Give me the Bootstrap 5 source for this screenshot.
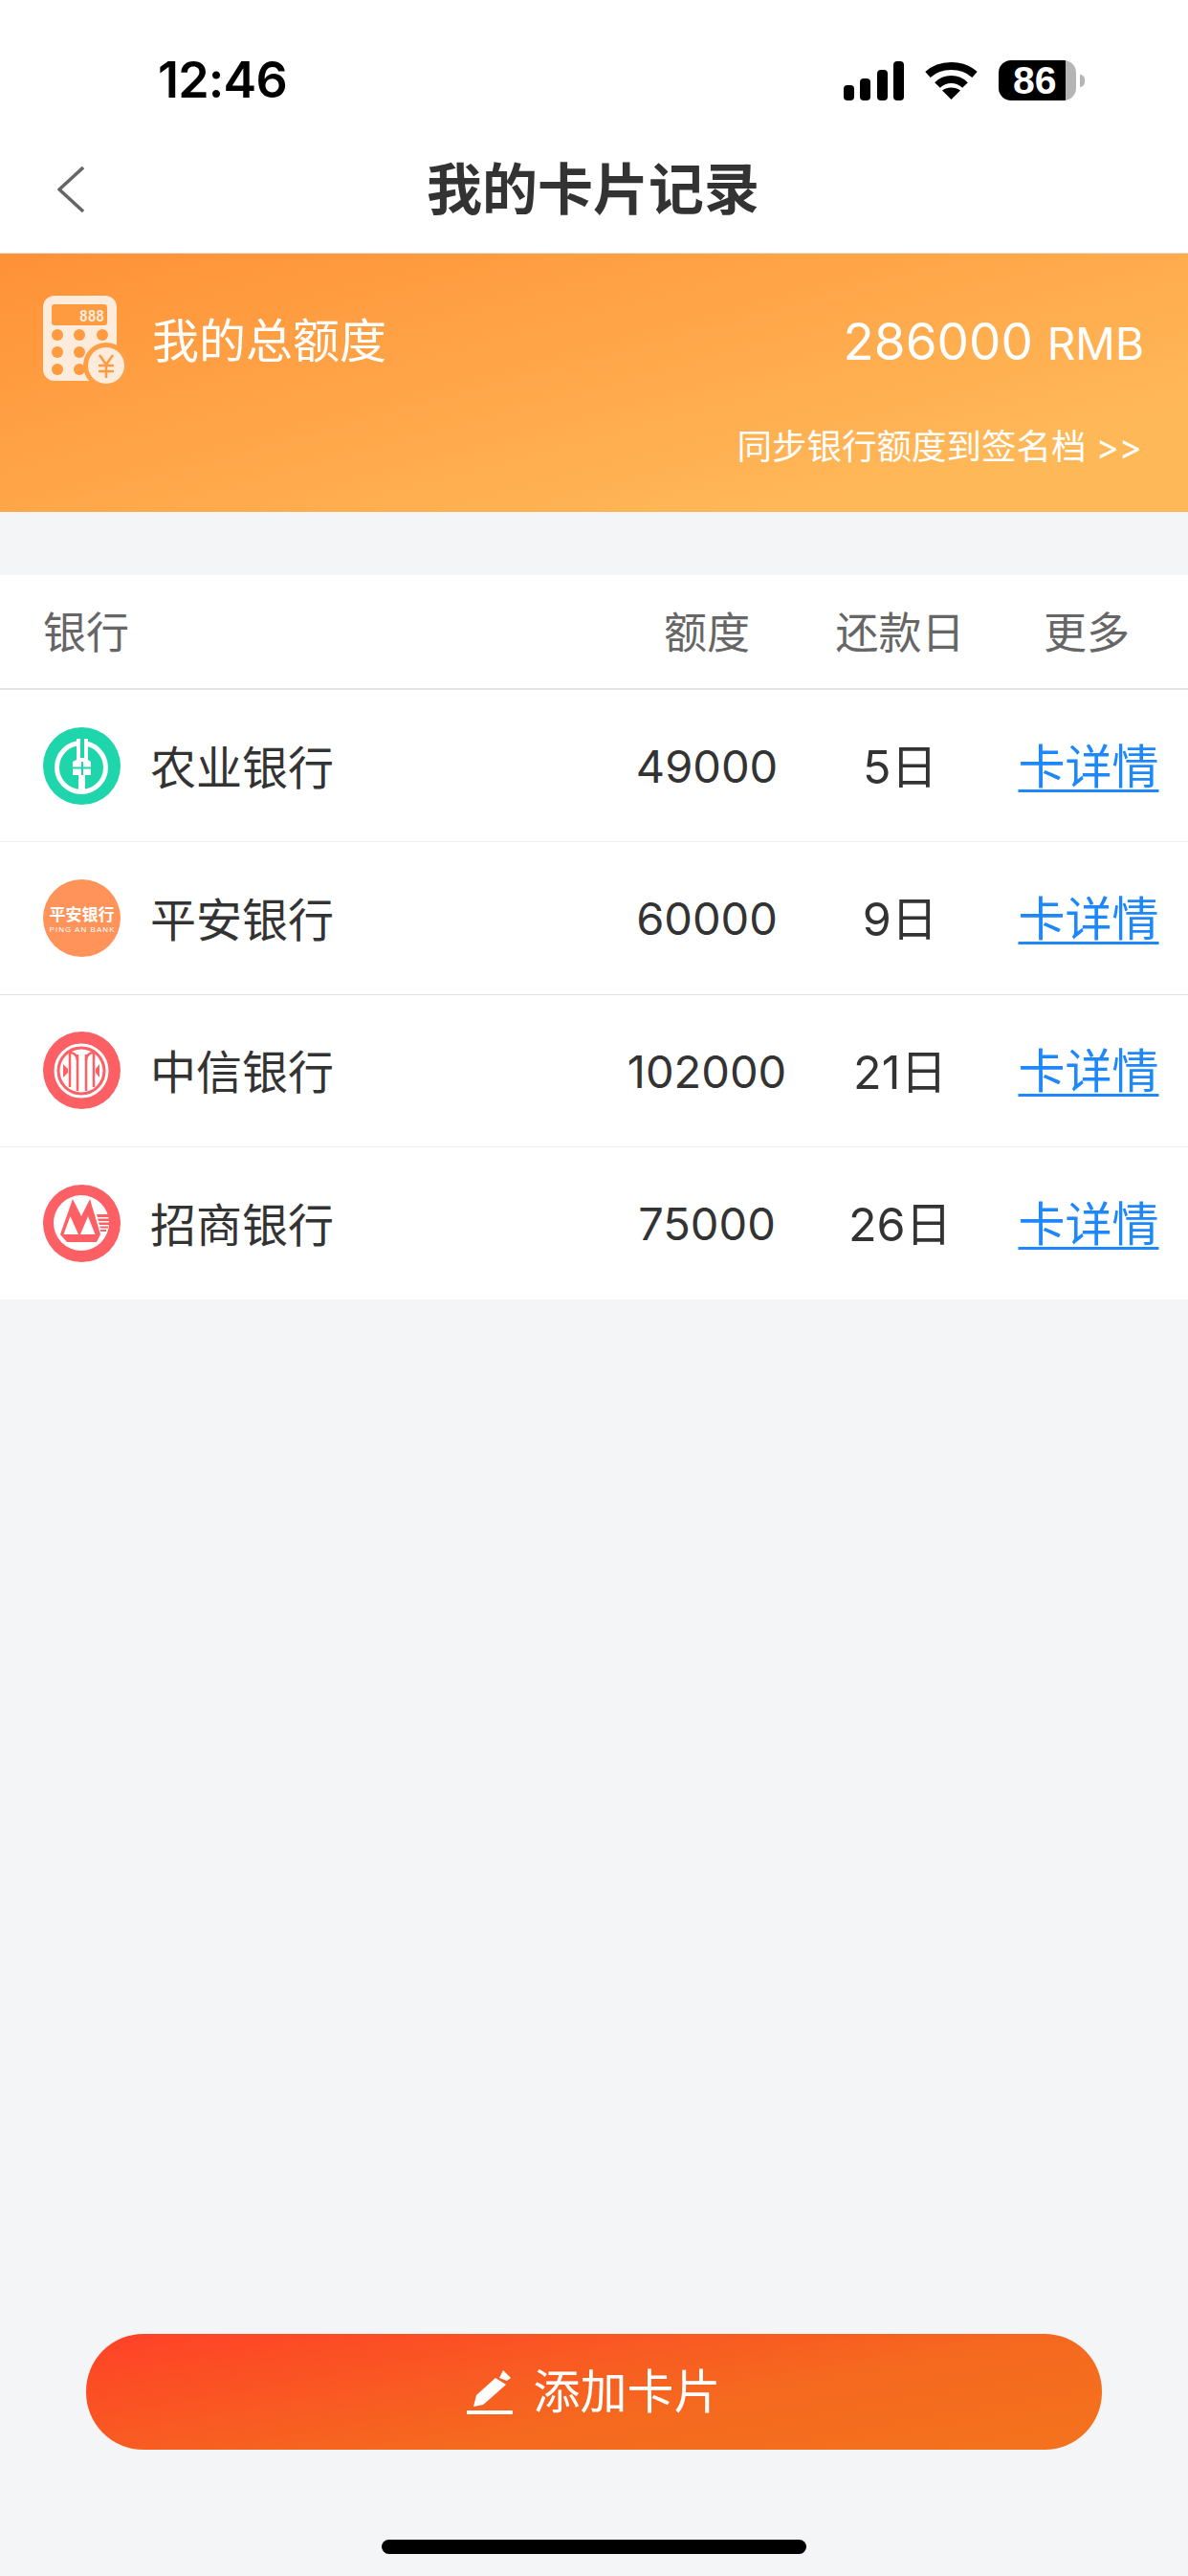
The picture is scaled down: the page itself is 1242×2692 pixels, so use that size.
<!DOCTYPE html>
<html lang="zh">
<head>
<meta charset="utf-8">
<title>我的卡片记录</title>
<link href="https://cdn.jsdelivr.net/npm/bootstrap@5.3.0/dist/css/bootstrap.min.css" rel="stylesheet">
<style>
html,body{height:100%}
body{background:#f4f5f7;color:#333;font-family:Inter,"Noto Sans CJK SC",sans-serif;font-size:48px;line-height:1.2}
.screen{height:2692px;overflow:hidden}
.status-top{height:128px;padding:40px 0 0 165px;background:#fff;flex:none}
.clock{font:600 52px/88px Inter,sans-serif;color:#000;letter-spacing:-.8px;width:660px}
.status-icons{margin-left:auto;padding-right:117px;height:88px;gap:22px}
.batt{width:81px;height:42px;border-radius:13px;background:linear-gradient(90deg,#000 0,#000 86.5%,#b5b5b5 86.5%);color:#fff;font:700 41px/42px "Liberation Sans",sans-serif;padding-left:15px;position:relative}
.batt-nub{position:absolute;right:-9px;top:15px;width:5px;height:13px;background:#b5b5b5;border-radius:0 5px 5px 0}
.top-nav{height:137px;background:#fff;border-bottom:1px solid #e3e3e3;flex:none;padding:4px 0 0 60px;position:relative}
.top-nav h1{font-size:58px;font-weight:700;color:#333;margin:0 auto;position:absolute;left:0;right:0;top:38px;text-align:center;padding-right:2px;line-height:64px}
.summary{height:270px;background:linear-gradient(165deg,#ff9137 0%,#ffb858 82%);color:#fff;padding:44px 46px 0 45px;flex:none}
.summary-title{font-size:49px;margin-left:22px;line-height:56px;padding-top:20px}
.summary-total{margin-left:auto;font-size:53px;line-height:56px;padding-top:20px;font-weight:400}
.summary-total span{font-size:46px}
.sync-line{font-size:36.500px;text-align:right;margin-top:45px;padding-right:2px;line-height:42px}
.gap-band{height:66px;flex:none}
.bank-table{background:#fff;flex:none}
.col-name{flex:1;min-width:0;padding-left:45px}
.col-amt{width:202px;text-align:center}
.col-day{width:202px;text-align:center}
.col-more{width:200px;text-align:center;padding-right:8px}
.head-row{height:120px;border-bottom:2px solid #e3e3e3;font-size:45px;color:#666;padding-top:4px}
.head-row .col-more{padding-right:12px}
.data-row{height:159.3px;border-bottom:1px solid #efefef;font-size:47px}
.data-row.strong{border-bottom-color:#e0e0e0}
.data-row:last-child{border-bottom:0}
.data-row .col-amt{padding-top:2px}
.data-row .col-day,.data-row .col-more{padding-top:4px}
.data-row .col-day{font-size:48.500px}
.bank-label{margin-left:31px;font-size:48px;padding-top:5px}
.data-row a{color:#1e88fb;font-size:49px;text-decoration:underline;text-decoration-thickness:3px;text-underline-offset:6px}
.add-wrap{padding:0 90px;margin-top:auto}
.add-btn{height:121px;width:100%;border:0;border-radius:60px;background:linear-gradient(170deg,#ff4127 0%,#f5691f 60%,#f4731d 100%);color:#fff;font-size:49px;gap:21px}
.add-btn:hover,.add-btn:active{background:linear-gradient(170deg,#ff4127 0%,#f4731d 100%);color:#fff}
.home-bar{width:444px;height:15px;background:#000;border-radius:8px;margin:94px auto 23px}
svg{display:block;flex:none}
</style>
</head>
<body>
<div class="screen d-flex flex-column">
  <div class="status-top d-flex">
    <div class="clock">12:46</div>
    <div class="status-icons d-flex align-items-center">
      <svg width="63" height="42" viewBox="0 0 63 42"><rect x="0" y="26" width="11" height="16" rx="4"/><rect x="17" y="19" width="11" height="23" rx="4"/><rect x="35" y="10" width="11" height="32" rx="4"/><rect x="52" y="1" width="11" height="41" rx="4"/></svg>
      <svg width="55" height="42" viewBox="0 0 55 42"><path d="M3 15C16 3 39 3 52 15" fill="none" stroke="#000" stroke-width="8"/><path d="M13 26C21 18 34 18 42 26" fill="none" stroke="#000" stroke-width="8"/><path d="M27.500 41L18 31.500C23 27.500 32 27.500 37 31.500Z"/></svg>
      <div class="batt">86<span class="batt-nub"></span></div>
    </div>
  </div>
  <div class="top-nav d-flex align-items-center">
    <svg width="28" height="48" viewBox="0 0 28 48"><path d="M27 1L2 24L27 47" fill="none" stroke="#666" stroke-width="3.500"/></svg>
    <h1>我的卡片记录</h1>
  </div>
  <div class="summary">
    <div class="d-flex align-items-start">
      <svg width="92" height="92" viewBox="45 309 92 92">
        <rect x="45" y="309" width="77" height="89" rx="12" fill="#fdebdc"/>
        <rect x="54" y="318" width="58" height="22" rx="3" fill="#fe9a40"/>
        <text x="83" y="336" font-size="18" font-weight="700" fill="#fdebdc" font-family="Liberation Mono,monospace" textLength="26" lengthAdjust="spacingAndGlyphs">888</text>
        <g fill="#fe9a40"><circle cx="60" cy="350" r="6"/><circle cx="83" cy="350" r="6"/><circle cx="107" cy="350" r="6"/><circle cx="60" cy="368" r="6"/><circle cx="83" cy="368" r="6"/><circle cx="60" cy="386" r="6"/><circle cx="83" cy="386" r="6"/></g>
        <circle cx="111" cy="382" r="24" fill="#fe9f44"/>
        <circle cx="111" cy="382" r="19" fill="#fdebdc"/>
        <path d="M104 371L111 381L118 371M103 382H119M103 388H119M111 381V395" fill="none" stroke="#fe9a40" stroke-width="2.500"/>
      </svg>
      <div class="summary-title">我的总额度</div>
      <div class="summary-total">286000 <span>RMB</span></div>
    </div>
    <div class="sync-line">同步银行额度到签名档 &gt;&gt;</div>
  </div>
  <div class="gap-band"></div>
  <div class="bank-table">
    <div class="head-row d-flex align-items-center">
      <div class="col-name">银行</div><div class="col-amt">额度</div><div class="col-day">还款日</div><div class="col-more">更多</div>
    </div>
    <div class="data-row d-flex align-items-center">
      <div class="col-name d-flex align-items-center">
        <svg width="81" height="81" viewBox="0 0 81 81"><circle cx="40.500" cy="40.500" r="40.500" fill="#1fd6ac"/><circle cx="40" cy="42" r="25.500" fill="none" stroke="#fff" stroke-width="5"/><path d="M35 12H47V34L50 36V50H44V68H37V50H31V36L35 34Z" fill="#fff"/><path d="M39 12H43V32H39ZM31 41.500H50V43.500H31ZM40 36H42V50H40Z" fill="#1fd6ac"/></svg>
        <span class="bank-label">农业银行</span>
      </div>
      <div class="col-amt">49000</div><div class="col-day">5日</div><div class="col-more"><a href="#">卡详情</a></div>
    </div>
    <div class="data-row strong d-flex align-items-center">
      <div class="col-name d-flex align-items-center">
        <svg width="81" height="81" viewBox="0 0 81 81"><circle cx="40.500" cy="40.500" r="40.500" fill="#ff9359"/><text x="40.500" y="43" text-anchor="middle" font-size="17" font-weight="700" fill="#fff" font-family="Noto Sans CJK SC,sans-serif">平安银行</text><text x="40.500" y="55" text-anchor="middle" font-size="8" fill="#fff" font-family="Liberation Sans,sans-serif" textLength="68">PING AN BANK</text></svg>
        <span class="bank-label">平安银行</span>
      </div>
      <div class="col-amt">60000</div><div class="col-day">9日</div><div class="col-more"><a href="#">卡详情</a></div>
    </div>
    <div class="data-row d-flex align-items-center">
      <div class="col-name d-flex align-items-center">
        <svg width="81" height="81" viewBox="0 0 81 81"><circle cx="40.500" cy="40.500" r="40.500" fill="#fd6064"/><circle cx="40" cy="41" r="27" fill="none" stroke="#fff" stroke-width="3"/><circle cx="40" cy="41" r="22.500" fill="#fff"/><g fill="none" stroke="#fd6064" stroke-width="2.500"><path d="M28 22V58M36 24V62M45 24V62M53 22V58"/><path d="M28 22C31 22 36 24 36 30M53 22C50 22 45 24 45 30"/></g><path d="M21 34V48L26 43V39Z M59 34V48L55 43V39Z" fill="#fd6064"/></svg>
        <span class="bank-label">中信银行</span>
      </div>
      <div class="col-amt">102000</div><div class="col-day">21日</div><div class="col-more"><a href="#">卡详情</a></div>
    </div>
    <div class="data-row d-flex align-items-center">
      <div class="col-name d-flex align-items-center">
        <svg width="81" height="81" viewBox="0 0 81 81"><circle cx="40.500" cy="40.500" r="40.500" fill="#fd6064"/><circle cx="40" cy="40" r="29" fill="#fff"/><path d="M31 15L40 33L49 15L60 52L56 60H25L18 52Z" fill="#fd6064"/><path d="M28.500 33L21.500 52H37ZM47 33L39 52H54.500Z" fill="#fff"/><path d="M56 31H69V34H57ZM57 35.500H69.500V38H58ZM58 39.500H69V42H59ZM59 43.500H68V45.500H60ZM60 47H66V49H60Z" fill="#fd6064"/></svg>
        <span class="bank-label">招商银行</span>
      </div>
      <div class="col-amt">75000</div><div class="col-day">26日</div><div class="col-more"><a href="#">卡详情</a></div>
    </div>
  </div>
  <div class="add-wrap">
    <button type="button" class="btn add-btn d-flex align-items-center justify-content-center">
      <svg width="48" height="46" viewBox="0 0 48 46"><path d="M38 0L46 8L42 11L34 8Z" fill="#fff"/><path d="M30 8L41 15L17 36L7 38L10 26Z" fill="#fff"/><rect x="0" y="42" width="48" height="4" fill="#fff"/></svg>
      <span>添加卡片</span>
    </button>
  </div>
  <div class="home-bar"></div>
</div>
<script src="https://cdn.jsdelivr.net/npm/bootstrap@5.3.0/dist/js/bootstrap.bundle.min.js"></script>
</body>
</html>
